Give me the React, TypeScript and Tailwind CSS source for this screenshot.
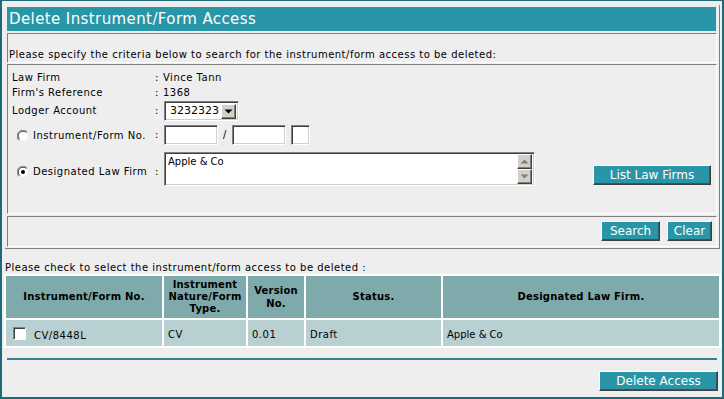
import React from "react";

const insetField =
  "bg-white border border-t-[#808080] border-l-[#808080] border-b-white border-r-white shadow-[inset_1px_1px_0_#404040,inset_-1px_-1px_0_#d4d0c8]";

const tealButton =
  "h-[20px] bg-[#2896a6] text-white text-[12px] leading-[18px] tracking-normal border border-t-white border-l-white border-b-[#404040] border-r-[#404040] shadow-[inset_-1px_-1px_0_#2a5c66] flex items-center justify-center";

const groove =
  "border border-t-[#808080] border-l-[#808080] border-b-white border-r-white";

const th = "h-[42px] bg-[#7eaaab] font-bold tracking-[0.2px] flex items-center justify-center text-center";
const td = "h-[26px] bg-[#b8d0d2] flex items-center pl-[4px] pt-[3px]";

function Radio({ checked }: { checked?: boolean }) {
  return (
    <svg width="12" height="12" viewBox="0 0 12 12" className="shrink-0">
      <circle cx="6" cy="6" r="5.5" fill="white" stroke="#e8e8e8" />
      <path d="M10.2 1.8 A5.5 5.5 0 0 0 1.8 10.2" stroke="#808080" fill="none" />
      <path d="M9.4 2.6 A4.5 4.5 0 0 0 2.6 9.4" stroke="#404040" fill="none" />
      {checked && <circle cx="6" cy="6" r="2" fill="black" />}
    </svg>
  );
}

function ArrowBox({ dir, color }: { dir: "up" | "down"; color: string }) {
  return (
    <div className="w-[15px] h-[15px] bg-[#d4d0c8] border border-t-white border-l-white border-b-[#404040] border-r-[#404040] shadow-[inset_-1px_-1px_0_#808080] flex items-center justify-center">
      <svg width="9" height="5" viewBox="0 0 9 5">
        {dir === "down" ? (
          <path d="M0.5 0.5 H8.5 L4.5 4.5 Z" fill={color} />
        ) : (
          <path d="M0.5 4.5 H8.5 L4.5 0.5 Z" fill={color} />
        )}
      </svg>
    </div>
  );
}

export default function App() {
  return (
    <div className="w-[724px] h-[399px] overflow-hidden bg-[#eeeeee] border-t border-l-2 border-r-2 border-b-2 border-[#1c6b78] font-['DejaVu_Sans',Verdana,sans-serif] text-[10px] leading-[12px] tracking-[0.5px] text-black">
      {/* search panel */}
      <div className="ml-[3px] mt-[4px] w-[715px] pt-[2px] pl-[2px] pb-[1px] border-r border-b border-[#808080]">
        <div className="h-[24px] w-[709px] bg-[#2896a6] text-white text-[15px] leading-[24px] tracking-[0.4px] pl-[2px]">
          Delete Instrument/Form Access
        </div>

        <div className={`mt-[2px] h-[30px] w-[710px] pl-[1px] pt-[15px] ${groove}`}>
          Please specify the criteria below to search for the instrument/form access to be deleted:
        </div>

        <div className={`mt-[1px] h-[150px] w-[710px] pt-[5px] pl-[4px] ${groove}`}>
          <div className="flex items-center h-[16px]">
            <span className="w-[143px]">Law Firm</span>
            <span className="w-[8px]">:</span>
            <span>Vince Tann</span>
          </div>
          <div className="flex items-center h-[13px]">
            <span className="w-[143px]">Firm's Reference</span>
            <span className="w-[8px]">:</span>
            <span>1368</span>
          </div>
          <div className="flex items-center h-[20px] mt-[2px]">
            <span className="w-[143px]">Lodger Account</span>
            <span className="w-[9px]">:</span>
            <div className={`w-[75px] h-[20px] flex items-center justify-between pl-[5px] pr-[2px] ${insetField}`}>
              <span className="text-[11px] tracking-normal">3232323</span>
              <ArrowBox dir="down" color="black" />
            </div>
          </div>
          <div className="flex items-center h-[20px] mt-[4px]">
            <div className="w-[143px] flex items-center gap-[4px] pl-[5px] pt-[1px]">
              <Radio />
              <span>Instrument/Form No.</span>
            </div>
            <span className="w-[9px]">:</span>
            <div className={`w-[54px] h-[20px] ${insetField}`} />
            <span className="w-[14px] text-center">/</span>
            <div className={`w-[54px] h-[20px] ${insetField}`} />
            <div className={`ml-[5px] w-[19px] h-[20px] ${insetField}`} />
          </div>
          <div className="flex items-start h-[34px] mt-[7px]">
            <div className="w-[143px] h-[34px] flex items-center gap-[4px] pl-[5px] pt-[5px]">
              <Radio checked />
              <span>Designated Law Firm</span>
            </div>
            <span className="w-[9px] h-[34px] flex items-center pt-[5px]">:</span>
            <div className={`w-[371px] h-[34px] flex justify-between pl-[3px] pt-[3px] pr-[2px] tracking-normal ${insetField}`}>
              <span>Apple &amp; Co</span>
              <div className="flex flex-col -mt-[2px]">
                <ArrowBox dir="up" color="#808080" />
                <ArrowBox dir="down" color="#808080" />
              </div>
            </div>
            <div className="ml-[58px] mt-[13px]">
              <button className={`${tealButton} w-[118px]`}>List Law Firms</button>
            </div>
          </div>
        </div>

        <div className={`mt-[2px] h-[31px] w-[710px] flex justify-end items-start gap-[7px] pt-[4px] pr-[4px] ${groove}`}>
          <button className={`${tealButton} w-[59px]`}>Search</button>
          <button className={`${tealButton} w-[45px]`}>Clear</button>
        </div>
      </div>

      {/* results */}
      <div className="mt-[13px] pl-[3px]">
        Please check to select the instrument/form access to be deleted :
      </div>

      <div className="ml-[2px] w-[717px] bg-white p-[2px] grid grid-cols-[156px_82px_56px_135px_276px] gap-[2px]">
        <div className={th}>Instrument/Form No.</div>
        <div className={th}>Instrument Nature/Form Type.</div>
        <div className={`${th} leading-[13px]`}>Version No.</div>
        <div className={th}>Status.</div>
        <div className={th}>Designated Law Firm.</div>

        <div className="h-[26px] bg-[#b8d0d2] flex items-center pl-[7px]">
          <div className="w-[13px] h-[13px] bg-white border border-t-[#808080] border-l-[#808080] border-b-white border-r-white shadow-[inset_1px_1px_0_#404040]" />
          <span className="ml-[8px] pt-[5px]">CV/8448L</span>
        </div>
        <div className={td}>CV</div>
        <div className={td}>0.01</div>
        <div className={td}>Draft</div>
        <div className={`${td} tracking-normal`}>Apple &amp; Co</div>
      </div>

      <div className="ml-[5px] mt-[10px] w-[710px] h-[2px] bg-[#3a8090]" />

      <div className="flex justify-end mt-[11px] pr-[4px]">
        <button className={`${tealButton} w-[119px]`}>Delete Access</button>
      </div>
    </div>
  );
}
